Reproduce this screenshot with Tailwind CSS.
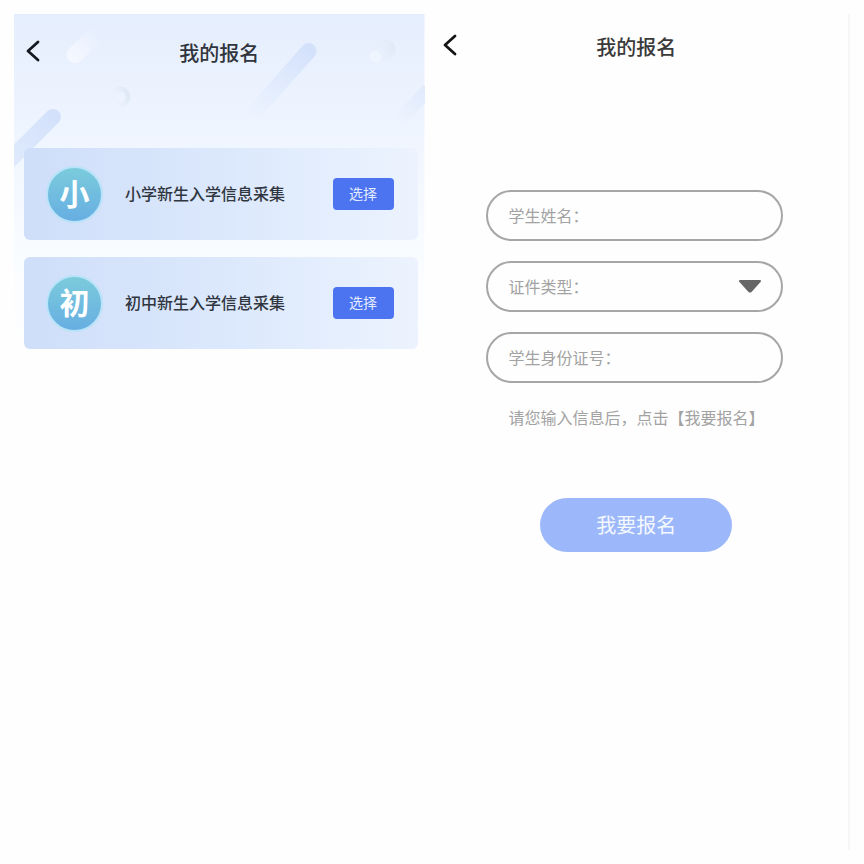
<!DOCTYPE html>
<html lang="zh-CN">
<head>
    <meta charset="UTF-8">
    <meta name="viewport" content="width=device-width, initial-scale=1.0">
    <title>我的报名</title>
    <script src="https://cdn.jsdelivr.net/npm/@tailwindcss/browser@4"></script>
</head>
<body class="bg-[#fefefe] font-['Noto_Sans_CJK_SC',sans-serif]">

    <main class="flex min-h-screen p-[14px]">

        <!-- Enrollment list -->
        <section class="relative flex-[411] min-w-0">

            <!-- Backdrop -->
            <svg class="absolute top-0 left-0 w-full" viewBox="0 0 411 336" fill="none" aria-hidden="true">
                <defs>
                    <linearGradient id="sky" x1="0" y1="0" x2="0" y2="1">
                        <stop offset="0" stop-color="#e5eefd"/>
                        <stop offset="0.35" stop-color="#eff5ff"/>
                        <stop offset="0.7" stop-color="#f9fcff"/>
                        <stop offset="1" stop-color="#fefefe"/>
                    </linearGradient>
                    <linearGradient id="bar1" gradientUnits="userSpaceOnUse" x1="296" y1="36" x2="232" y2="108">
                        <stop offset="0" stop-color="#d3e1fb"/>
                        <stop offset="1" stop-color="#dfeafd" stop-opacity="0"/>
                    </linearGradient>
                    <linearGradient id="bar2" gradientUnits="userSpaceOnUse" x1="40" y1="102" x2="-10" y2="152">
                        <stop offset="0" stop-color="#d3e1fb"/>
                        <stop offset="1" stop-color="#d9e6fc" stop-opacity="0.7"/>
                    </linearGradient>
                    <linearGradient id="bar3" gradientUnits="userSpaceOnUse" x1="415" y1="72" x2="382" y2="110">
                        <stop offset="0" stop-color="#dfe9fb"/>
                        <stop offset="1" stop-color="#e3edfd" stop-opacity="0"/>
                    </linearGradient>
                    <linearGradient id="drop" gradientUnits="userSpaceOnUse" x1="58" y1="42" x2="84" y2="20">
                        <stop offset="0" stop-color="#f3f7ff"/>
                        <stop offset="1" stop-color="#f3f7ff" stop-opacity="0"/>
                    </linearGradient>
                    <linearGradient id="ring" x1="1" y1="0.3" x2="0" y2="0.7">
                        <stop offset="0" stop-color="#dfe8f6"/>
                        <stop offset="1" stop-color="#e9f1fd" stop-opacity="0"/>
                    </linearGradient>
                </defs>
                <rect width="411" height="336" fill="url(#sky)"/>
                <path d="M61 41L80 22" stroke="url(#drop)" stroke-width="17" stroke-linecap="round"/>
                <path d="M295 37L232 108" stroke="url(#bar1)" stroke-width="16" stroke-linecap="round"/>
                <path d="M39 103L-10 152" stroke="url(#bar2)" stroke-width="16" stroke-linecap="round"/>
                <path d="M415 76L382 110" stroke="url(#bar3)" stroke-width="14"/>
                <circle cx="106" cy="83" r="8" stroke="url(#ring)" stroke-width="5"/>
                <circle cx="371" cy="36" r="11" fill="url(#ring)"/>
                <circle cx="362" cy="43" r="6" fill="#eff5ff"/>
            </svg>

            <div class="relative">
                <header class="grid h-[134px] grid-cols-[1fr_auto_1fr] items-start pt-6">
                    <a href="#" aria-label="返回" class="ml-3 w-4 pt-[2px]">
                        <svg class="h-[22px] w-4" viewBox="0 0 16 22" fill="none" stroke="#15181e" stroke-width="2.8" stroke-linecap="round" stroke-linejoin="round">
                            <path d="M12 2L2 11L12 20"/>
                        </svg>
                    </a>
                    <h1 class="text-[20px] leading-[30px] font-medium text-[#30343c]">我的报名</h1>
                </header>

                <ul class="flex flex-col gap-[17px] pr-[7px] pl-[10px]">
                    <li class="flex h-[92px] items-center rounded-md bg-linear-to-r from-[#cfdef9] via-[#dbe8fc] to-[#ecf3fe] pr-6 pl-[22px]">
                        <span class="flex size-[57px] items-center justify-center rounded-full border-2 border-[#b9e3f8] bg-linear-to-b from-[#7bcbdc] to-[#67aee2] pb-1 text-[30px] leading-none font-bold text-white">小</span>
                        <h2 class="ml-[22px] flex-1 pb-[2px] text-[16px] font-medium text-[#30363f]">小学新生入学信息采集</h2>
                        <button type="button" class="h-8 w-[61px] rounded bg-[#4d74f0] pb-[2px] text-[14px] text-[#e4ecff]">选择</button>
                    </li>
                    <li class="flex h-[92px] items-center rounded-md bg-linear-to-r from-[#cfdef9] via-[#dbe8fc] to-[#ecf3fe] pr-6 pl-[22px]">
                        <span class="flex size-[57px] items-center justify-center rounded-full border-2 border-[#b9e3f8] bg-linear-to-b from-[#7bcbdc] to-[#67aee2] pb-1 text-[30px] leading-none font-bold text-white">初</span>
                        <h2 class="ml-[22px] flex-1 pb-[2px] text-[16px] font-medium text-[#30363f]">初中新生入学信息采集</h2>
                        <button type="button" class="h-8 w-[61px] rounded bg-[#4d74f0] pb-[2px] text-[14px] text-[#e4ecff]">选择</button>
                    </li>
                </ul>
            </div>
        </section>

        <!-- Enrollment form -->
        <section class="flex-[424] min-w-0 border-r-2 border-[#f6f6f6]">
            <header class="grid h-[176px] grid-cols-[1fr_auto_1fr] items-start pt-[18px]">
                <a href="#" aria-label="返回" class="ml-[18px] w-4 pt-[2px]">
                    <svg class="h-[22px] w-4" viewBox="0 0 16 22" fill="none" stroke="#151515" stroke-width="2.8" stroke-linecap="round" stroke-linejoin="round">
                        <path d="M12 2L2 11L12 20"/>
                    </svg>
                </a>
                <h1 class="text-[20px] leading-[30px] font-medium text-[#3a3a3a]">我的报名</h1>
            </header>

            <form class="flex flex-col text-[16px] text-[#a2a2a2]">
                <div class="flex flex-col gap-5 pr-[65px] pl-[61px]">
                    <div class="flex h-[51px] items-center rounded-full border-2 border-[#a6a6a6] pr-5 pl-[21px]">
                        <label for="name" class="pb-[2px]">学生姓名：</label>
                        <input id="name" type="text" class="min-w-0 flex-1 outline-none">
                    </div>
                    <div class="flex h-[51px] items-center rounded-full border-2 border-[#a6a6a6] pr-5 pl-[21px]">
                        <label for="idType" class="pb-[2px]">证件类型：</label>
                        <select id="idType" class="min-w-0 flex-1 appearance-none outline-none">
                            <option value=""></option>
                            <option value="1">居民身份证</option>
                            <option value="2">护照</option>
                        </select>
                        <svg class="pointer-events-none h-[13px] w-[22px]" viewBox="0 0 22 13" fill="#666" stroke="#666" stroke-width="2" stroke-linejoin="round" aria-hidden="true">
                            <path d="M1 1H21L12 11Q11 12 10 11Z"/>
                        </svg>
                    </div>
                    <div class="flex h-[51px] items-center rounded-full border-2 border-[#a6a6a6] pr-5 pl-[21px]">
                        <label for="idNumber" class="pb-[2px]">学生身份证号：</label>
                        <input id="idNumber" type="text" class="min-w-0 flex-1 outline-none">
                    </div>
                    <p class="pt-[2px] pl-[23px] leading-6 whitespace-nowrap">请您输入信息后，点击【我要报名】</p>
                </div>
                <button type="button" class="mt-[69px] h-[54px] w-[192px] self-center rounded-full bg-[#9db8fa] text-[20px] text-[#f4f8ff]">我要报名</button>
            </form>
        </section>

    </main>

</body>
</html>
